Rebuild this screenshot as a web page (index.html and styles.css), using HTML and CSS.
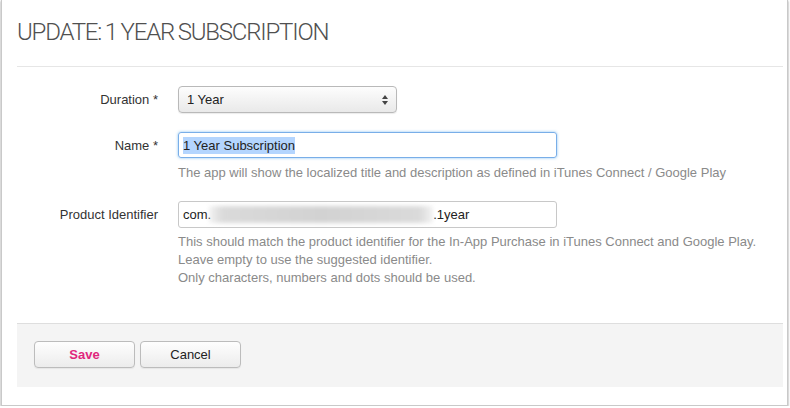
FILE: index.html
```html
<!DOCTYPE html>
<html>
<head>
<meta charset="utf-8">
<link rel="stylesheet" href="styles.css">
</head>
<body>
<div class="panel">
  <div class="header">
    <h1 class="title">UPDATE: 1 YEAR SUBSCRIPTION</h1>
  </div>
  <div class="form">
    <div class="row">
      <div class="label">Duration *</div>
      <div class="field">
        <div class="select">
          <span>1 Year</span>
          <svg class="arrows" width="8" height="12" viewBox="0 0 8 12"><path d="M4 1 L7 5 L1 5 Z" fill="#444"/><path d="M4 11 L7 7 L1 7 Z" fill="#444"/></svg>
        </div>
      </div>
    </div>
    <div class="row">
      <div class="label">Name *</div>
      <div class="field">
        <div class="input focused"><span class="sel">1 Year Subscription</span></div>
        <div class="help">The app will show the localized title and description as defined in iTunes Connect / Google Play</div>
      </div>
    </div>
    <div class="row">
      <div class="label">Product Identifier</div>
      <div class="field">
        <div class="input">com.<span class="blur"></span>.1year</div>
        <div class="help help-multi">This should match the product identifier for the In-App Purchase in iTunes Connect and Google Play.<br>Leave empty to use the suggested identifier.<br>Only characters, numbers and dots should be used.</div>
      </div>
    </div>
  </div>
  <div class="footer">
    <button class="btn btn-save">Save</button>
    <button class="btn">Cancel</button>
  </div>
</div>
</body>
</html>
```

FILE: styles.css
```css
html, body {
  margin: 0;
  padding: 0;
  background: #fff;
}
body {
  font-family: "Liberation Sans", Arial, sans-serif;
  font-size: 13px;
  color: #333;
}
.panel {
  box-sizing: border-box;
  width: 787px;
  height: 406px;
  margin-left: 1px;
  border: 1px solid #c9c9c9;
  border-top: none;
  box-shadow: 0 1px 2px rgba(0,0,0,0.45);
  padding: 0 4px 0 15px;
  background: #fff;
}
.header {
  height: 66px;
  border-bottom: 1px solid #e6e6e6;
  box-sizing: content-box;
}
.title {
  margin: 0;
  padding-top: 17px;
  font-family: Roboto, "Open Sans", sans-serif;
  font-weight: 300;
  font-size: 24px;
  line-height: 30px;
  color: #505050;
  letter-spacing: -1.2px;
  word-spacing: -1px;
}
.form {
  padding-top: 19px;
}
.row {
  display: flex;
  align-items: flex-start;
  margin-bottom: 19px;
}
.label {
  width: 141px;
  text-align: right;
  line-height: 27px;
  color: #333;
  padding-right: 20px;
  flex: none;
}
.field {
  flex: 1;
}
.select {
  box-sizing: border-box;
  width: 219px;
  height: 27px;
  border: 1px solid #b9b9b9;
  border-radius: 4px;
  background: linear-gradient(#fdfdfd, #e9e9e9);
  box-shadow: 0 1px 1px rgba(0,0,0,0.08);
  display: flex;
  align-items: center;
  justify-content: space-between;
  padding: 0 7px 0 8px;
  color: #222;
}
.arrows {
  display: block;
}
.input {
  box-sizing: border-box;
  width: 379px;
  height: 27px;
  border: 1px solid #c8c8c8;
  border-radius: 3px;
  padding: 0 4px;
  line-height: 25px;
  color: #222;
  display: flex;
  align-items: center;
  white-space: pre;
}
.input.focused {
  height: 26px;
  border-color: #79aee8;
  box-shadow: 0 0 3px rgba(82,168,236,0.7);
}
.sel {
  background: #b4d5fe;
  line-height: 17px;
}
.blur {
  display: inline-block;
  width: 224px;
  height: 17px;
  margin-left: -2px;
  background: linear-gradient(90deg, rgba(215,215,215,0.3), #dadada 6%, #d2d2d2 50%, #dadada 94%, rgba(215,215,215,0.3));
  filter: blur(2px);
}
.help {
  color: #8a8a8a;
  line-height: 18px;
  margin-top: 6px;
}
.help-multi {
  margin-top: 5px;
}
.row:last-child {
  margin-bottom: 36px;
}
.footer {
  height: 46px;
  border-top: 1px solid #dedede;
  background: #f4f4f4;
  padding: 17px 0 0 17px;
  display: flex;
  gap: 5px;
  align-items: flex-start;
}
.btn {
  box-sizing: border-box;
  width: 101px;
  height: 27px;
  border: 1px solid #bcbcbc;
  border-radius: 4px;
  background: linear-gradient(#fefefe, #ececec);
  box-shadow: 0 1px 1px rgba(0,0,0,0.06);
  font-family: "Liberation Sans", Arial, sans-serif;
  font-size: 13px;
  color: #222;
  padding: 0;
  margin: 0;
}
.btn-save {
  color: #e0267d;
  font-weight: bold;
}
```
